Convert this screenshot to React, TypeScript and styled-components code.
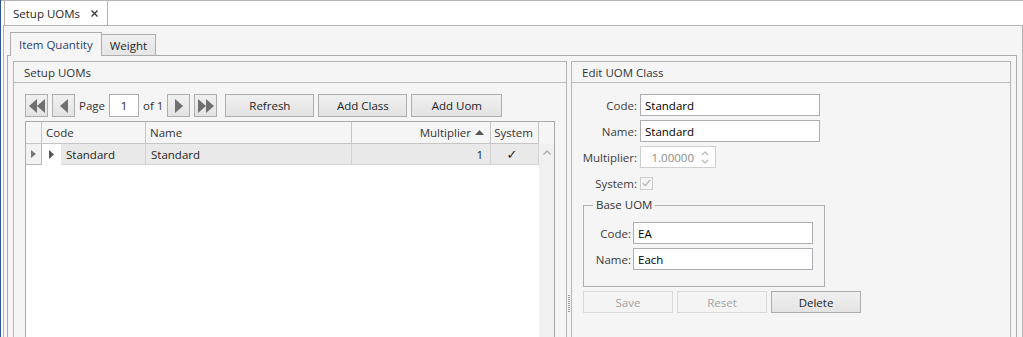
import React from "react";
import styled, { createGlobalStyle } from "styled-components";

const GlobalStyle = createGlobalStyle`
  html, body {
    margin: 0;
    padding: 0;
    background: #ffffff;
  }
  body {
    font-family: "Open Sans", "Segoe UI", sans-serif;
    font-size: 11.5px;
    color: #1e1e1e;
  }
  *, *::before, *::after {
    box-sizing: border-box;
  }
`;

const Window = styled.div`
  width: 1023px;
  height: 337px;
  overflow: hidden;
  display: flex;
  flex-direction: column;
  border-left: 1px solid #2b5797;
  background: #ffffff;
`;

const DocStrip = styled.div`
  height: 25px;
  flex: none;
  display: flex;
  border-top: 1px solid #b4b4b4;
  padding-left: 3px;
`;

const DocTab = styled.div`
  display: flex;
  align-items: center;
  gap: 11px;
  padding: 0 9px 0 8px;
  border-left: 1px solid #b4b4b4;
  border-right: 1px solid #b4b4b4;
  background: #ffffff;
`;

const OuterPanel = styled.div`
  flex: 1;
  min-height: 0;
  margin-left: 2px;
  display: flex;
  flex-direction: column;
  border: 1px solid #b4b4b4;
  border-bottom: none;
  background: #f5f5f5;
  padding: 0 5px 0 3px;
`;

const TabRow = styled.div`
  height: 29px;
  flex: none;
  display: flex;
  align-items: flex-end;
  padding-left: 3px;
`;

const Tab = styled.div<{ $active?: boolean }>`
  position: relative;
  z-index: ${(p) => (p.$active ? 1 : 0)};
  height: ${(p) => (p.$active ? "24px" : "21px")};
  margin-bottom: ${(p) => (p.$active ? "-1px" : "0")};
  margin-left: ${(p) => (p.$active ? "0" : "-1px")};
  padding: 0 8px;
  display: flex;
  align-items: center;
  border: 1px solid #acacac;
  border-bottom: none;
  background: ${(p) => (p.$active ? "#f5f5f5" : "linear-gradient(#f0f0f0, #e5e5e5)")};
  color: ${(p) => (p.$active ? "#2c3d72" : "#1e1e1e")};
`;

const TabPanel = styled.div`
  flex: 1;
  min-height: 0;
  display: flex;
  border: 1px solid #acacac;
  border-bottom: none;
  padding: 5px 5px 0;
  background: #f5f5f5;
`;

const GroupBox = styled.section<{ $width: number }>`
  width: ${(p) => p.$width}px;
  flex: none;
  display: flex;
  flex-direction: column;
  border: 1px solid #b4b4b4;
  border-bottom: none;
`;

const GroupHeader = styled.div`
  height: 21px;
  flex: none;
  display: flex;
  align-items: center;
  padding-left: 10px;
  border-bottom: 1px solid #bcbcbc;
  color: #333333;
`;

const GroupBody = styled.div`
  flex: 1;
  min-height: 0;
  display: flex;
  flex-direction: column;
  padding: 11px 11px 0;
`;

const Pager = styled.div`
  height: 23px;
  flex: none;
  display: flex;
  align-items: center;
  gap: 4px;
`;

const PagerText = styled.span`
  color: #333333;
`;

const PageBox = styled.div`
  width: 30px;
  height: 23px;
  display: flex;
  align-items: center;
  justify-content: center;
  border: 1px solid #abadb3;
  background: #ffffff;
`;

const Button = styled.button<{ $width: number; $height?: number; $gapBefore?: number }>`
  width: ${(p) => p.$width}px;
  height: ${(p) => p.$height ?? 22}px;
  margin-left: ${(p) => p.$gapBefore ?? 0}px;
  flex: none;
  display: flex;
  align-items: center;
  justify-content: center;
  padding: 0;
  font: inherit;
  color: #1e1e1e;
  border: 1px solid #adadad;
  background: linear-gradient(#f0f0f0, #e3e3e3);

  &:disabled {
    border-color: #d9d9d9;
    background: #f4f4f4;
    color: #a3a3a3;
  }
`;

const Grid = styled.div`
  flex: 1;
  min-height: 0;
  margin-top: 4px;
  display: grid;
  grid-template-columns: 16px 104px 206px 139px 48px 15px;
  grid-template-rows: 22px 21px 1fr;
  border: 1px solid #a9a9a9;
  border-bottom: none;
  background: #ffffff;
`;

const HeaderCell = styled.div<{ $align?: "start" | "end" | "center" }>`
  display: flex;
  align-items: center;
  justify-content: ${(p) => (p.$align === "end" ? "flex-end" : p.$align === "center" ? "center" : "flex-start")};
  gap: 4px;
  padding: 0 6px 0 4px;
  background: #f5f5f5;
  border-right: 1px solid #c5c5c5;
  border-bottom: 1px solid #c5c5c5;
  color: #333333;
  white-space: nowrap;
`;

const ScrollHeader = styled.div`
  background: #f5f5f5;
`;

const RowHeader = styled.div`
  display: flex;
  align-items: center;
  justify-content: center;
  background: #f2f2f2;
  border-right: 1px solid #b9b9b9;
  border-bottom: 1px solid #b9b9b9;
`;

const TreeCell = styled.div`
  display: flex;
  border-right: 1px solid #d3d3d3;
`;

const Expander = styled.div`
  width: 19px;
  flex: none;
  display: flex;
  align-items: center;
  justify-content: center;
  background: #ffffff;
`;

const DataCell = styled.div<{ $align?: "start" | "end" | "center"; $bare?: boolean }>`
  flex: 1;
  display: flex;
  align-items: center;
  justify-content: ${(p) => (p.$align === "end" ? "flex-end" : p.$align === "center" ? "center" : "flex-start")};
  padding: 0 7px 0 5px;
  background: #e9e9e9;
  border-right: ${(p) => (p.$bare ? "none" : "1px solid #d3d3d3")};
  border-bottom: 1px solid #d3d3d3;
  white-space: nowrap;
`;

const Check = styled.span`
  font-family: "DejaVu Sans", sans-serif;
  font-size: 13px;
  color: #1e1e1e;
  margin-right: 3px;
`;

const GridBody = styled.div`
  grid-column: 1 / 6;
  grid-row: 3;
  background: #ffffff;
`;

const ScrollTrack = styled.div`
  grid-column: 6;
  grid-row: 2 / 4;
  display: flex;
  justify-content: center;
  padding-top: 6px;
  background: #f0f0f0;
`;

const Splitter = styled.div`
  width: 4px;
  flex: none;
  display: flex;
  justify-content: center;
`;

const Grip = styled.div`
  margin-top: 234px;
  width: 2px;
  height: 17px;
  background: repeating-linear-gradient(to bottom, #9a9a9a 0 1px, transparent 1px 2px);
`;

const FormGrid = styled.div<{ $labelWidth: number; $gap: number }>`
  display: grid;
  grid-template-columns: ${(p) => p.$labelWidth}px 180px;
  grid-auto-rows: 22px;
  column-gap: ${(p) => p.$gap}px;
  row-gap: 4px;
  align-items: center;
`;

const FieldLabel = styled.span`
  justify-self: end;
  color: #3c3c3c;
  white-space: nowrap;
`;

const TextBox = styled.div`
  height: 22px;
  display: flex;
  align-items: center;
  padding: 0 4px;
  border: 1px solid #abadb3;
  background: #ffffff;
  color: #000000;
`;

const Spinner = styled.div`
  width: 76px;
  height: 22px;
  display: flex;
  align-items: center;
  justify-content: flex-end;
  gap: 7px;
  padding-right: 6px;
  border: 1px solid #cfcfcf;
  background: #ffffff;
  color: #8a8a8a;
`;

const CheckBox = styled.div`
  width: 13px;
  height: 13px;
  display: flex;
  align-items: center;
  justify-content: center;
  border: 1px solid #cccccc;
  background: #f7f7f7;
`;

const Fieldset = styled.fieldset`
  width: 242px;
  margin: 4px 0 0;
  padding: 10px 11px 16px 12px;
  border: 1px solid #b0b0b0;
  min-inline-size: 0;
`;

const Legend = styled.legend`
  margin-left: -3px;
  padding: 0 3px;
  line-height: 14px;
  color: #333333;
`;

const ButtonRow = styled.div`
  display: flex;
  gap: 4px;
  margin-top: 4px;
`;

const Tri = ({ dir, size = 14, color = "#707070" }: { dir: "left" | "right"; size?: number; color?: string }) => {
  const w = Math.round(size * 0.57);
  const pts = dir === "left" ? `${w},0 0,${size / 2} ${w},${size}` : `0,0 ${w},${size / 2} 0,${size}`;
  return (
    <svg width={w} height={size} viewBox={`0 0 ${w} ${size}`}>
      <polygon points={pts} fill={color} />
    </svg>
  );
};

const DoubleTri = ({ dir }: { dir: "left" | "right" }) => (
  <svg width="16" height="14" viewBox="0 0 16 14">
    {dir === "left" ? (
      <>
        <polygon points="8,0 0,7 8,14" fill="#707070" />
        <polygon points="16,0 8,7 16,14" fill="#707070" />
      </>
    ) : (
      <>
        <polygon points="0,0 8,7 0,14" fill="#707070" />
        <polygon points="8,0 16,7 8,14" fill="#707070" />
      </>
    )}
  </svg>
);

export default function App() {
  return (
    <>
      <GlobalStyle />
      <Window>
        <DocStrip>
          <DocTab>
            <span>Setup UOMs</span>
            <svg width="7" height="7" viewBox="0 0 7 7">
              <path d="M0.5 0.5 L6.5 6.5 M6.5 0.5 L0.5 6.5" stroke="#333" strokeWidth="1.3" />
            </svg>
          </DocTab>
        </DocStrip>

        <OuterPanel>
          <TabRow>
            <Tab $active>Item Quantity</Tab>
            <Tab>Weight</Tab>
          </TabRow>

          <TabPanel>
            <GroupBox $width={554}>
              <GroupHeader>Setup UOMs</GroupHeader>
              <GroupBody>
                <Pager>
                  <Button $width={23} $height={23}>
                    <DoubleTri dir="left" />
                  </Button>
                  <Button $width={23} $height={23}>
                    <Tri dir="left" />
                  </Button>
                  <PagerText>Page</PagerText>
                  <PageBox>1</PageBox>
                  <PagerText>of 1</PagerText>
                  <Button $width={23} $height={23}>
                    <Tri dir="right" />
                  </Button>
                  <Button $width={23} $height={23}>
                    <DoubleTri dir="right" />
                  </Button>
                  <Button $width={89} $height={23} $gapBefore={4}>
                    Refresh
                  </Button>
                  <Button $width={89} $height={23}>
                    Add Class
                  </Button>
                  <Button $width={91} $height={23}>
                    Add Uom
                  </Button>
                </Pager>

                <Grid>
                  <HeaderCell />
                  <HeaderCell>Code</HeaderCell>
                  <HeaderCell>Name</HeaderCell>
                  <HeaderCell $align="end">
                    Multiplier
                    <svg width="9" height="5" viewBox="0 0 9 5">
                      <polygon points="0,5 4.5,0 9,5" fill="#555" />
                    </svg>
                  </HeaderCell>
                  <HeaderCell $align="center">System</HeaderCell>
                  <ScrollHeader />

                  <RowHeader>
                    <Tri dir="right" size={8} color="#777" />
                  </RowHeader>
                  <TreeCell>
                    <Expander>
                      <Tri dir="right" size={9} color="#555" />
                    </Expander>
                    <DataCell $bare>Standard</DataCell>
                  </TreeCell>
                  <DataCell>Standard</DataCell>
                  <DataCell $align="end">1</DataCell>
                  <DataCell $align="center">
                    <Check>✓</Check>
                  </DataCell>

                  <GridBody />
                  <ScrollTrack>
                    <svg width="8" height="5" viewBox="0 0 8 5">
                      <path d="M0.5 4.5 L4 1 L7.5 4.5" stroke="#a8a8a8" strokeWidth="1.3" fill="none" />
                    </svg>
                  </ScrollTrack>
                </Grid>
              </GroupBody>
            </GroupBox>

            <Splitter>
              <Grip />
            </Splitter>

            <GroupBox $width={440}>
              <GroupHeader>Edit UOM Class</GroupHeader>
              <GroupBody>
                <FormGrid $labelWidth={54} $gap={3}>
                  <FieldLabel>Code:</FieldLabel>
                  <TextBox>Standard</TextBox>
                  <FieldLabel>Name:</FieldLabel>
                  <TextBox>Standard</TextBox>
                  <FieldLabel>Multiplier:</FieldLabel>
                  <Spinner>
                    <span>1.00000</span>
                    <svg width="8" height="15" viewBox="0 0 8 15">
                      <path d="M1 5 L4 2 L7 5 M1 10 L4 13 L7 10" stroke="#b5b5b5" strokeWidth="1.2" fill="none" />
                    </svg>
                  </Spinner>
                  <FieldLabel>System:</FieldLabel>
                  <CheckBox>
                    <svg width="9" height="8" viewBox="0 0 9 8">
                      <path d="M0.8 4.2 L3.3 6.6 L8.2 1" stroke="#b8b8b8" strokeWidth="1.4" fill="none" />
                    </svg>
                  </CheckBox>
                </FormGrid>

                <Fieldset>
                  <Legend>Base UOM</Legend>
                  <FormGrid $labelWidth={35} $gap={2}>
                    <FieldLabel>Code:</FieldLabel>
                    <TextBox>EA</TextBox>
                    <FieldLabel>Name:</FieldLabel>
                    <TextBox>Each</TextBox>
                  </FormGrid>
                </Fieldset>

                <ButtonRow>
                  <Button $width={90} disabled>
                    Save
                  </Button>
                  <Button $width={90} disabled>
                    Reset
                  </Button>
                  <Button $width={90}>Delete</Button>
                </ButtonRow>
              </GroupBody>
            </GroupBox>
          </TabPanel>
        </OuterPanel>
      </Window>
    </>
  );
}
